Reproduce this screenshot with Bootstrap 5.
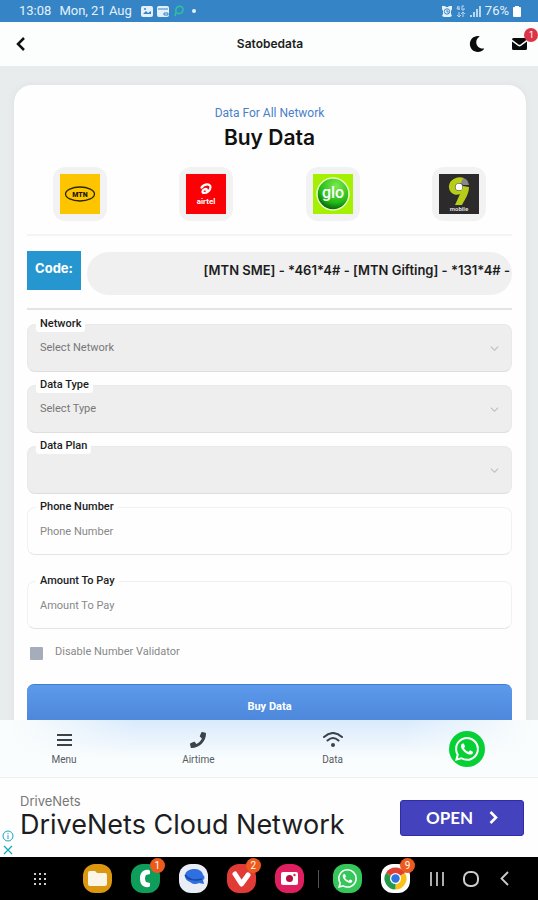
<!DOCTYPE html>
<html lang="en">
<head>
<meta charset="utf-8">
<meta name="viewport" content="width=device-width, initial-scale=1">
<title>Satobedata - Buy Data</title>
<link href="https://cdn.jsdelivr.net/npm/bootstrap@5.3.0/dist/css/bootstrap.min.css" rel="stylesheet">
<style>
  body { font-family: Roboto, "Liberation Sans", sans-serif; font-size: 11px; line-height: 16px; color: #1b1d21; background: #e8ecec; }
  .screen { height: 100vh; }
  .status-bar { height: 22px; background: #3585c6; color: #e4f1fb; font-size: 13px; padding: 0 17px 0 19px; }
  .app-header { height: 44px; background: #fcfefd; padding: 0 10px 0 12px; font-family: Inter, sans-serif; }
  .app-header .head-side { flex: 1 1 0; }
  .app-title { font-size: 12px; font-weight: 600; line-height: 16px; }
  .icon-btn { width: 18px; height: 18px; }
  .mail-count { top: -7px; right: -10px; width: 14px; height: 14px; font-size: 9px; line-height: 14px; background: #dc3548; }
  .app-main { padding: 19px 12px 0 14px; scrollbar-width: none; background: #e8ecec; }
  .app-main::-webkit-scrollbar { display: none; }
  .form-panel { background: #fefefe; border-radius: 18px; padding: 20px 14px 24px 13px; box-shadow: 0 0 8px #0000000d; }
  .eyebrow { font-size: 12px; color: #4a7fca; }
  .panel-title { margin-top: 3px; font-family: Inter, sans-serif; font-size: 21px; line-height: 28px; font-weight: 600; color: #111; }
  .network-row { --bs-gutter-x: 20px; margin-top: 15px; }
  .network-tile { width: 54px; height: 54px; border-radius: 12px; background: #f2f2f2; }
  .rule-light { height: 2px; background: #f4f4f4; margin: 13px 0 15px; }
  .rule-dark { height: 2px; background: #e4e4e4; margin: 13px 0 14px; }
  .code-tag { width: 54px; height: 39px; background: #2596d0; color: #fff; font-family: Inter, sans-serif; font-size: 13px; font-weight: 700; line-height: 34px; }
  .code-strip { height: 43px; margin: 1px 0 0 6px; border-radius: 22px; background: #f0f0f0; font-family: Inter, sans-serif; font-size: 13px; font-weight: 600; font-feature-settings: "calt" 0; line-height: 36px; padding-right: 2px; }
  .field-group { margin-bottom: 13px; }
  .field-group.spaced { margin-bottom: 26px; }
  .field-group label { top: -8px; left: 9px; padding: 0 4px; background: #fefefe; font-weight: 500; border-radius: 3px; }
  .field-group .form-control, .field-group .form-select { height: 48px; padding: 0 12px; border: 1px solid #f1f1f1; border-bottom-color: #e4e4e4; border-radius: 8px; font-size: 11px; color: #777; background-color: #fefefe; }
  .field-group .form-control::placeholder { color: #888; opacity: 1; }
  .field-group .form-select { --bs-form-select-bg-img: url("data:image/svg+xml,%3Csvg xmlns='http://www.w3.org/2000/svg' viewBox='0 0 10 10'%3E%3Cpath d='M1 3l4 4 4-4' fill='none' stroke='%23bbb' stroke-width='1.2'/%3E%3C/svg%3E"); background-image: var(--bs-form-select-bg-img); background-color: #eee; background-size: 9px 9px; background-position: right 12px center; border-color: #e9e9e9; border-bottom-color: #dedede; opacity: 1; }
  .validator { margin: 15px 0 24px 3px; color: #888; }
  .validator input { appearance: none; width: 13px; height: 13px; margin: 3px 0 0; background: #a5adba; border-radius: 1px; }
  .buy-btn { height: 48px; padding: 0 0 4px; font-size: 11px; line-height: 16px; font-weight: 700; color: #fff; border: 0; border-top: 1px solid #3f7fd3; border-radius: 7px; background: linear-gradient(#5d9aeb, #4781d6); }
  .tab-bar { height: 58px; padding: 0 47px 0 40px; background: linear-gradient(90deg, #fafdfd 2%, #fafdfd00 25%, #fafdfd00 75%, #fafdfd 99%), linear-gradient(#d9eafd, #fafdfd 70%); border-bottom: 1px solid #eceff0; }
  .tab-link { width: 48px; color: #555b62; font-size: 10px; line-height: 12px; gap: 6px; }
  .tab-link svg { flex: none; }
  .ad { height: 79px; padding-right: 14px; background: #fefefe; color: #1d1d1f; }
  .ad-marks { width: 15px; color: #16a7b9; gap: 3px; padding-bottom: 2px; }
  .ad-copy { margin-left: 5px; }
  .ad-brand { font-family: Inter, sans-serif; font-size: 13px; line-height: 14px; color: #777; }
  .ad-title { font-family: Inter, sans-serif; font-size: 27px; line-height: 34px; }
  .ad-open { width: 124px; height: 36px; font-family: Lato, sans-serif; font-size: 17px; line-height: 24px; font-weight: 700; color: #fff; background: #4542bd; border: 1px solid #302ba8; border-radius: 3px; padding: 0; }
  .task-bar { display: grid; grid-template-columns: 66fr repeat(5, 48fr) 10fr 48fr 48fr 34fr 34fr 34fr; height: 43px; padding: 0 3% 0 7px; background: #000; }
  .task-bar svg { display: block; }
  .task-count { top: -6px; right: -5px; width: 15px; height: 15px; border-radius: 50%; background: #ee5a1c; color: #fff; font-size: 10px; line-height: 15px; text-align: center; }
  .task-divider { width: 1px; height: 18px; background: #555; }
</style>
<script src="https://cdn.jsdelivr.net/npm/bootstrap@5.3.0/dist/js/bootstrap.bundle.min.js"></script>
</head>
<body>
<svg class="d-none" xmlns="http://www.w3.org/2000/svg">
  <symbol id="whatsapp" viewBox="0 0 16 16"><path d="M13.601 2.326A7.854 7.854 0 0 0 7.994 0C3.627 0 .068 3.558.064 7.926c0 1.399.366 2.76 1.057 3.965L0 16l4.204-1.102a7.933 7.933 0 0 0 3.79.965h.004c4.368 0 7.926-3.558 7.93-7.93A7.898 7.898 0 0 0 13.6 2.326zM7.994 14.521a6.573 6.573 0 0 1-3.356-.92l-.24-.144-2.494.654.666-2.433-.156-.251a6.56 6.56 0 0 1-1.007-3.505c0-3.626 2.957-6.584 6.591-6.584a6.56 6.56 0 0 1 4.66 1.931 6.557 6.557 0 0 1 1.928 4.66c-.004 3.639-2.961 6.592-6.592 6.592zm3.615-4.934c-.197-.099-1.17-.578-1.353-.646-.182-.065-.315-.099-.445.099-.133.197-.513.646-.627.775-.114.133-.232.148-.43.05-.197-.1-.836-.308-1.592-.985-.59-.525-.985-1.175-1.103-1.372-.114-.198-.011-.304.088-.403.087-.088.197-.232.296-.346.1-.114.133-.198.198-.33.065-.134.034-.248-.015-.347-.05-.099-.445-1.076-.612-1.47-.16-.389-.323-.335-.445-.34-.114-.007-.247-.007-.38-.007a.729.729 0 0 0-.529.247c-.182.198-.691.677-.691 1.654 0 .977.71 1.916.81 2.049.098.133 1.394 2.132 3.383 2.992.47.205.84.326 1.129.418.475.152.904.129 1.246.08.38-.058 1.171-.48 1.338-.943.164-.464.164-.86.114-.943-.049-.084-.182-.133-.38-.232z"/></symbol>
</svg>
<div class="screen d-flex flex-column overflow-hidden">
  <div class="status-bar d-flex align-items-center justify-content-between flex-shrink-0">
    <div class="d-flex align-items-center">
      <span>13:08</span><span class="ms-2">Mon, 21 Aug</span>
      <svg class="ms-2" width="56" height="12" viewBox="0 0 56 12" aria-hidden="true">
        <rect x="1" y="1" width="12" height="11" rx="2" fill="#e4f1fb"/><path d="M3 9l3-3 2 2 3-2v3z" fill="#3585c6"/><circle cx="5" cy="4" r="1" fill="#3585c6"/>
        <rect x="17" y="1" width="12" height="11" rx="2" fill="#e4f1fb"/><path d="M18 4h10M24 8h4v2h-4z" stroke="#3585c6" fill="none"/>
        <path d="M35 11l1-3c-2-9 8-8 7-3-1 4-4 4-6 3" fill="none" stroke="#2fc39c" stroke-width="1.5"/>
        <circle cx="54" cy="6" r="2" fill="#e4f1fb"/>
      </svg>
    </div>
    <div class="d-flex align-items-center">
      <svg class="me-1" width="39" height="12" viewBox="0 0 39 12" fill="#e4f1fb" aria-hidden="true">
        <path d="M0 1h3l1 1h2l1-1h3v3L9 6v3l1 2-2 1H2L0 11l1-2V6L0 4z"/><circle cx="5" cy="6.500" r="2.700" fill="none" stroke="#3585c6"/><path d="M5 5v2h2" stroke="#3585c6" fill="none"/>
        <path d="M16 1l-1 3h3M17 1v4M22 1h-2v4h2V3M17 7v5M15 10l2 2 2-2M21 12V7M19 9l2-2 2 2" fill="none" stroke="#b9d8f0"/>
        <path d="M28 10h2v2h-2zM31 7h2v5h-2zM34 4h2v8h-2zM37 1h2v11h-2z" opacity=".75"/>
      </svg>
      <span>76%</span>
      <svg class="ms-1" width="8" height="11" viewBox="0 0 8 11" aria-hidden="true"><path d="M2 0h4v1h1q1 0 1 1v8q0 1-1 1H1q-1 0-1-1V2q0-1 1-1h1z" fill="#fff"/></svg>
    </div>
  </div>

  <header class="app-header d-flex align-items-center flex-shrink-0">
    <div class="head-side d-flex">
      <button type="button" class="icon-btn btn p-0 border-0 d-flex align-items-center justify-content-center" aria-label="Back">
        <svg width="10" height="14" viewBox="0 0 10 14" fill="none" stroke="#111" stroke-width="2.500"><path d="M8 1L2 7l6 6"/></svg>
      </button>
    </div>
    <h1 class="app-title mb-0">Satobedata</h1>
    <div class="head-side d-flex justify-content-end">
      <button type="button" class="icon-btn btn p-0 border-0 d-flex align-items-center justify-content-center me-4" aria-label="Dark mode">
        <svg width="16" height="16" viewBox="0 0 512 512" fill="#080a0c"><path d="M283.211 512c78.962 0 151.079-35.925 198.857-94.792 7.068-8.708-.639-21.430-11.562-19.350-124.203 23.654-238.262-71.576-238.262-196.954 0-72.222 38.662-138.635 101.498-174.394 9.686-5.512 7.250-20.197-3.756-22.230A258.156 258.156 0 0 0 283.211 0c-141.309 0-256 114.511-256 256 0 141.309 114.511 256 256 256z"/></svg>
      </button>
      <button type="button" class="icon-btn btn p-0 border-0 d-flex align-items-center justify-content-center position-relative" aria-label="Messages, 1 unread">
        <svg width="15" height="12" viewBox="0 0 15 12" fill="#080a0c"><path d="M1.500 0h12q1.500 0 1.500 1.500L8.500 6.500q-1 .700-2 0L0 1.500Q0 0 1.500 0zM0 3.500l5.800 4.300q1.700 1.200 3.400 0L15 3.500v7q0 1.500-1.500 1.500h-12Q0 12 0 10.500z"/></svg>
        <span class="mail-count position-absolute rounded-circle text-white">1</span>
      </button>
    </div>
  </header>

  <main class="app-main flex-grow-1 overflow-auto">
    <form class="form-panel">
      <p class="eyebrow text-center mb-0">Data For All Network</p>
      <h2 class="panel-title text-center mb-0">Buy Data</h2>
      <div class="network-row row">
        <div class="col-3 d-flex justify-content-center"><div class="network-tile d-flex align-items-center justify-content-center">
          <svg width="40" height="40" viewBox="0 0 40 40" role="img" aria-label="MTN"><path fill="#fdc500" d="M0 0h40v40H0z"/><ellipse cx="20" cy="20" rx="14.500" ry="7" fill="none" stroke="#2b2500" stroke-width="1.300"/><text x="20" y="23" text-anchor="middle" font-size="7" font-weight="900" fill="#1d1900">MTN</text></svg>
        </div></div>
        <div class="col-3 d-flex justify-content-center"><div class="network-tile d-flex align-items-center justify-content-center">
          <svg width="40" height="40" viewBox="0 0 40 40" role="img" aria-label="airtel"><path fill="#fb0004" d="M0 0h40v40H0z"/><path d="M15.500 13.500c3-4 9-4 9-.5 0 3-3 6-6.500 6-2 0-2-2.500 0-3.500 2-1 3.500-.5 2.500 1" fill="none" stroke="#fff" stroke-width="2.200" stroke-linecap="round"/><text x="20" y="30" text-anchor="middle" font-size="8" font-weight="700" fill="#fff">airtel</text></svg>
        </div></div>
        <div class="col-3 d-flex justify-content-center"><div class="network-tile d-flex align-items-center justify-content-center">
          <svg width="40" height="40" viewBox="0 0 40 40" role="img" aria-label="glo"><defs><radialGradient id="ball" cx=".6" cy=".25" r=".8"><stop offset="0" stop-color="#7bea4c"/><stop offset=".65" stop-color="#22bb17"/><stop offset="1" stop-color="#064a08"/></radialGradient></defs><path fill="#a5f000" d="M0 0h40v40H0z"/><circle cx="20" cy="20" r="16" fill="url(#ball)" stroke="#e6ffc4" stroke-width="1.500"/><text x="20" y="24" text-anchor="middle" font-size="16" font-weight="500" fill="#fff">glo</text></svg>
        </div></div>
        <div class="col-3 d-flex justify-content-center"><div class="network-tile d-flex align-items-center justify-content-center">
          <svg width="40" height="40" viewBox="0 0 40 40" role="img" aria-label="9mobile"><path fill="#2d2a2b" d="M0 0h40v40H0z"/><path d="M25 4C17 1 9 7 10 14c1 6 7 8 11 6l-5 11h7c3-6 7-11 7-18l-6-1c0 7-8 6-8 1 0-4 5-5 8-3z" fill="#b8cd17"/><path d="M24 4q5 1 6 7h-6l-2-2z" fill="#888"/><circle cx="20" cy="13" r="3.500" fill="#fff"/><text x="20" y="37" text-anchor="middle" font-size="6" font-weight="700" fill="#ddd">mobile</text></svg>
        </div></div>
      </div>
      <div class="rule-light"></div>
      <div class="d-flex align-items-start">
        <div class="code-tag text-center flex-shrink-0">Code:</div>
        <div class="code-strip flex-grow-1 overflow-hidden text-nowrap text-end">[MTN SME] - *461*4# - [MTN Gifting] - *131*4# -</div>
      </div>
      <div class="rule-dark"></div>
      <div class="field-group position-relative">
        <label class="position-absolute" for="network">Network</label>
        <select id="network" class="form-select"><option>Select Network</option></select>
      </div>
      <div class="field-group position-relative">
        <label class="position-absolute" for="dataType">Data Type</label>
        <select id="dataType" class="form-select"><option>Select Type</option></select>
      </div>
      <div class="field-group position-relative">
        <label class="position-absolute" for="dataPlan">Data Plan</label>
        <select id="dataPlan" class="form-select"><option></option></select>
      </div>
      <div class="field-group spaced position-relative">
        <label class="position-absolute" for="phone">Phone Number</label>
        <input id="phone" type="tel" class="form-control" placeholder="Phone Number">
      </div>
      <div class="field-group position-relative">
        <label class="position-absolute" for="amount">Amount To Pay</label>
        <input id="amount" type="text" class="form-control" placeholder="Amount To Pay">
      </div>
      <div class="validator d-flex align-items-start">
        <input id="validator" type="checkbox"><label class="ms-2 ps-1" for="validator">Disable Number Validator</label>
      </div>
      <button type="submit" class="buy-btn btn w-100">Buy Data</button>
    </form>
  </main>

  <nav class="tab-bar d-flex align-items-center justify-content-between flex-shrink-0">
    <a href="#" class="tab-link d-flex flex-column align-items-center text-decoration-none">
      <svg width="15" height="16" viewBox="0 0 15 16" stroke="#3d4248" stroke-width="2"><path d="M0 3h15M0 8h15M0 13h15"/></svg>Menu</a>
    <a href="#" class="tab-link d-flex flex-column align-items-center text-decoration-none">
      <svg width="16" height="16" viewBox="0 0 512 512" fill="#3d4248"><path d="M493.400 24.600l-104-24c-11.300-2.600-22.900 3.300-27.500 13.900l-48 112c-4.200 9.800-1.400 21.300 6.900 28l60.600 49.600c-36 76.700-98.900 140.500-177.200 177.200l-49.600-60.600c-6.800-8.300-18.200-11.100-28-6.900l-112 48C3.900 366.500-2 378.100.6 389.400l24 104C27.100 504.200 36.700 512 48 512c256.100 0 464-207.500 464-464 0-11.200-7.700-20.900-18.600-23.400z"/></svg>Airtime</a>
    <a href="#" class="tab-link d-flex flex-column align-items-center text-decoration-none">
      <svg width="20" height="16" viewBox="0 0 20 16" fill="none" stroke="#3d4248" stroke-width="2" stroke-linecap="round"><path d="M1 5q9-8 18 0M4.500 8.500q5.500-5 11 0"/><circle cx="10" cy="13" r="2" fill="#3d4248" stroke="none"/></svg>Data</a>
    <a href="#" class="tab-link d-flex justify-content-center" aria-label="WhatsApp">
      <svg width="36" height="36" viewBox="0 0 36 36" fill="#fff"><circle cx="18" cy="18" r="18" fill="#07d036"/><use href="#whatsapp" x="6" y="6" width="24" height="24"/></svg></a>
  </nav>

  <section class="ad d-flex flex-shrink-0" aria-label="Advertisement">
    <div class="ad-marks d-flex flex-column align-items-center justify-content-end">
      <svg width="12" height="12" viewBox="0 0 12 12" fill="none" stroke="currentColor"><circle cx="6" cy="6" r="5"/><path d="M6 5v4M6 3v1"/></svg>
      <svg width="10" height="10" viewBox="0 0 10 10" stroke="currentColor" stroke-width="1.200"><path d="M1 1l8 8M9 1L1 9"/></svg>
    </div>
    <div class="ad-copy flex-grow-1 align-self-center text-nowrap">
      <div class="ad-brand">DriveNets</div>
      <div class="ad-title">DriveNets Cloud Network</div>
    </div>
    <button type="button" class="ad-open btn align-self-center d-flex align-items-center justify-content-center flex-shrink-0">OPEN
      <svg class="ms-3" width="9" height="13" viewBox="0 0 9 13" fill="none" stroke="#fff" stroke-width="2.600"><path d="M1.500 1l5.500 5.500L1.500 12"/></svg></button>
  </section>

  <div class="task-bar flex-shrink-0 align-items-center">
    <div class="d-flex justify-content-center"><svg width="12" height="12" viewBox="0 0 12 12" fill="#ccc"><path d="M0 0h2v2H0zM5 0h2v2H5zM10 0h2v2h-2zM0 5h2v2H0zM5 5h2v2H5zM10 5h2v2h-2zM0 10h2v2H0zM5 10h2v2H5zM10 10h2v2h-2z"/></svg></div>
    <div class="d-flex justify-content-center"><svg width="29" height="29" viewBox="0 0 29 29"><rect width="29" height="29" rx="12" fill="#dc9710"/><path d="M5 9q0-2 2-2h5l2 2h8q2 0 2 2v9q0 2-2 2H7q-2 0-2-2z" fill="#fbf5e8"/></svg></div>
    <div class="d-flex justify-content-center"><div class="position-relative"><svg width="29" height="29" viewBox="0 0 29 29"><rect width="29" height="29" rx="12" fill="#0f9d5c"/><path d="M18 6c-6-1-9 3-9 8.500S12 24 18 23l1-1v-3l-4-1q-2-3.500 0-7l4-1V7z" fill="#fff"/></svg><span class="task-count position-absolute">1</span></div></div>
    <div class="d-flex justify-content-center"><svg width="29" height="29" viewBox="0 0 29 29"><rect width="29" height="29" rx="12" fill="#e9edf5"/><path d="M6 12c0-9 17-9 18-1 2 1 2 4 0 5l1 4-5-1c-3 2-7 1-9-1-3-1-5-3-5-6z" fill="#2f6fe0"/><path d="M6 11c3 5 10 6 17 4" stroke="#1748a8" stroke-width="1.500" fill="none"/></svg></div>
    <div class="d-flex justify-content-center"><div class="position-relative"><svg width="29" height="29" viewBox="0 0 29 29"><rect width="29" height="29" rx="12" fill="#e23a37"/><path d="M8 10l6.500 10L21 11" fill="none" stroke="#fff" stroke-width="5" stroke-linecap="round" stroke-linejoin="round"/></svg><span class="task-count position-absolute">2</span></div></div>
    <div class="d-flex justify-content-center"><svg width="29" height="29" viewBox="0 0 29 29"><rect width="29" height="29" rx="12" fill="#e01f60"/><rect x="6" y="8" width="17" height="13" rx="2" fill="#fff"/><circle cx="14.500" cy="14.500" r="3.500" fill="#b3123f"/><circle cx="19.500" cy="11" r="1.200" fill="#e01f60"/></svg></div>
    <div class="d-flex justify-content-center"><span class="task-divider"></span></div>
    <div class="d-flex justify-content-center"><svg width="29" height="29" viewBox="0 0 29 29" fill="#fff"><rect width="29" height="29" rx="12" fill="#35c759"/><use href="#whatsapp" x="5" y="5" width="19" height="19"/></svg></div>
    <div class="d-flex justify-content-center"><div class="position-relative"><svg width="29" height="29" viewBox="0 0 29 29"><rect width="29" height="29" rx="12" fill="#fff"/><path d="M14.500 14.500L4.970 9A11 11 0 0 1 24.030 9z" fill="#df4031"/><path d="M14.500 14.500L24.030 9A11 11 0 0 1 14.500 25.500z" fill="#fbc116"/><path d="M14.500 14.500V25.500A11 11 0 0 1 4.970 9z" fill="#24994b"/><circle cx="14.500" cy="14.500" r="5.500" fill="#fff"/><circle cx="14.500" cy="14.500" r="4.200" fill="#2f74e0"/></svg><span class="task-count position-absolute">9</span></div></div>
    <div class="d-flex justify-content-center"><svg width="14" height="14" viewBox="0 0 14 14" stroke="#ccc" stroke-width="1.700"><path d="M1 0v14M7 0v14M13 0v14"/></svg></div>
    <div class="d-flex justify-content-center"><svg width="16" height="16" viewBox="0 0 16 16"><rect x="1" y="1" width="14" height="14" rx="6" fill="none" stroke="#ccc" stroke-width="2"/></svg></div>
    <div class="d-flex justify-content-center"><svg width="9" height="15" viewBox="0 0 9 15" fill="none" stroke="#ccc" stroke-width="1.800"><path d="M8 1L1.500 7.500 8 14"/></svg></div>
  </div>
</div>
</body>
</html>
